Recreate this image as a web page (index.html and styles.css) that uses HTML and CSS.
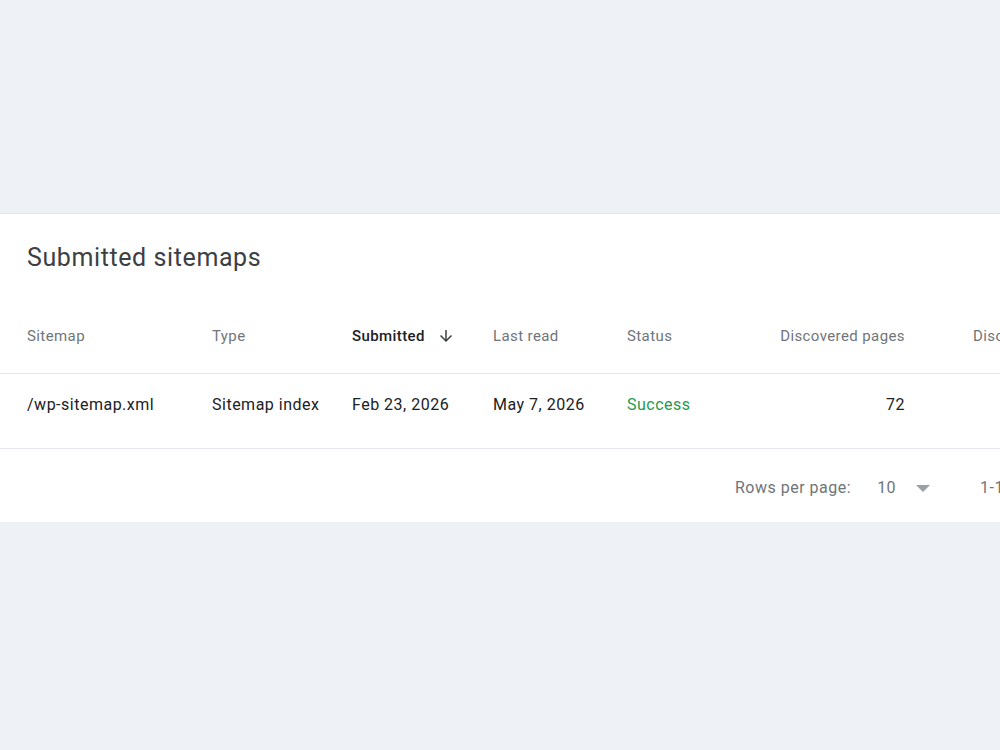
FILE: index.html
```html
<!DOCTYPE html>
<html lang="en">
  <head>
    <meta charset="UTF-8" />
    <meta name="viewport" content="width=device-width, initial-scale=1.0" />
    <title>Sitemaps</title>
    <link rel="stylesheet" href="styles.css">
  </head>
  <body>
    <div class="card">
      <h2 class="card-title">Submitted sitemaps</h2>

      <table class="sitemaps">
        <colgroup>
          <col class="c-sitemap">
          <col class="c-type">
          <col class="c-submitted">
          <col class="c-read">
          <col class="c-status">
          <col class="c-pages">
          <col>
        </colgroup>
        <thead>
          <tr>
            <th>Sitemap</th>
            <th>Type</th>
            <th class="sorted">Submitted
              <svg class="sort-icon" width="18" height="18" viewBox="0 0 24 24"><path d="M20 12l-1.41-1.41L13 16.17V4h-2v12.17l-5.58-5.59L4 12l8 8 8-8z"/></svg>
            </th>
            <th>Last read</th>
            <th>Status</th>
            <th class="num">Discovered pages</th>
            <th class="last">Discovered videos</th>
          </tr>
        </thead>
        <tbody>
          <tr>
            <td>/wp-sitemap.xml</td>
            <td>Sitemap index</td>
            <td>Feb 23, 2026</td>
            <td>May 7, 2026</td>
            <td class="ok">Success</td>
            <td class="num">72</td>
            <td class="num last">0</td>
          </tr>
        </tbody>
      </table>

      <div class="pager">
        <span class="pager-label">Rows per page:</span>
        <span class="pager-select">10
          <svg class="drop" width="14" height="7" viewBox="0 0 14 7"><path d="M0 0h14L7 7z"/></svg>
        </span>
        <span class="pager-range">1-1 of 1</span>
      </div>
    </div>
  </body>
</html>
```

FILE: styles.css
```css
* {
  margin: 0;
  padding: 0;
  box-sizing: border-box;
}

body {
  background: #eef1f6;
  font-family: Roboto, "Liberation Sans", sans-serif;
  color: #202124;
  overflow: hidden;
}

.card {
  margin-top: 213px;
  width: 1200px;
  background: #fff;
  border-top: 1px solid #e3e6ea;
  box-shadow: 0 1px 1px rgba(60, 64, 67, 0.5), 0 2px 3px rgba(60, 64, 67, 0.3);
}

.card-title {
  padding: 28px 0 0 27px;
  font-size: 25px;
  font-weight: 400;
  letter-spacing: 0.6px;
  line-height: 32px;
  color: #3c4043;
}

.sitemaps {
  width: 1200px;
  table-layout: fixed;
  border-collapse: collapse;
}

.c-sitemap { width: 212px; }
.c-type { width: 140px; }
.c-submitted { width: 141px; }
.c-read { width: 134px; }
.c-status { width: 134px; }
.c-pages { width: 144px; }

.sitemaps th,
.sitemaps td {
  text-align: left;
  white-space: nowrap;
  overflow: hidden;
}

.sitemaps th:first-child,
.sitemaps td:first-child {
  padding-left: 27px;
}

.sitemaps th {
  padding-top: 52px;
  padding-bottom: 27px;
  font-size: 15px;
  font-weight: 400;
  letter-spacing: 0.4px;
  line-height: 20px;
  color: #70757a;
  border-bottom: 1px solid #e6e8eb;
}

.sitemaps th.sorted {
  color: #202124;
  font-weight: 500;
}

.sort-icon {
  fill: #3c4043;
  vertical-align: -4px;
  margin-left: 8px;
}

.sitemaps td {
  padding-top: 19px;
  padding-bottom: 31px;
  font-size: 16px;
  letter-spacing: 0.5px;
  line-height: 24px;
  border-bottom: 1px solid #e6e8eb;
}

.sitemaps .num {
  text-align: right;
}

.sitemaps .last {
  padding-left: 68px;
}

.sitemaps td.ok {
  color: #1f9a4a;
}

.pager {
  display: flex;
  align-items: center;
  padding: 27px 0 22px 735px;
  font-size: 16px;
  letter-spacing: 0.5px;
  line-height: 24px;
  color: #70757a;
}

.pager-select {
  display: flex;
  align-items: center;
  margin-left: 26px;
}

.drop {
  fill: #9aa0a6;
  margin-left: 20px;
}

.pager-range {
  margin-left: 50px;
}
```
